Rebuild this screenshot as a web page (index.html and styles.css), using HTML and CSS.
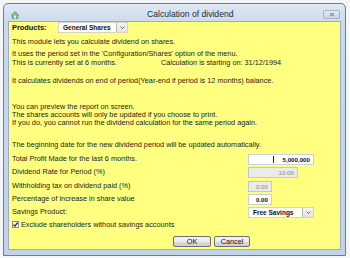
FILE: index.html
```html
<!DOCTYPE html>
<html>
<head>
<meta charset="utf-8">
<link rel="stylesheet" href="styles.css">
</head>
<body>
<div class="window">
  <div class="titlebar">
    <svg class="appicon" width="8" height="8" viewBox="0 0 8 8">
      <path d="M0.5 4 L4 0.8 L7.5 4 L6.8 4 L6.8 7.5 L1.2 7.5 L1.2 4 Z" fill="#7fc08a" stroke="#3f8a55" stroke-width="0.6"/>
      <rect x="3" y="4.6" width="2" height="2.9" fill="#e8f5e8"/>
    </svg>
    <div class="title">Calculation of dividend</div>
    <div class="closebtn">
      <svg width="6" height="5" viewBox="0 0 6 5"><path d="M1 0.8 L5 4.2 M5 0.8 L1 4.2" stroke="#7a8595" stroke-width="1.1"/></svg>
    </div>
  </div>
  <div class="client">
    <div class="products">
      <span class="prodlabel">Products:</span>
      <div class="select sel-products">
        <span class="seltext">General Shares</span>
        <span class="selarrow"><svg width="5" height="3" viewBox="0 0 5 3"><path d="M0.5 0.5 L2.5 2.5 L4.5 0.5" fill="none" stroke="#555" stroke-width="0.9"/></svg></span>
      </div>
    </div>
    <div class="line l1">This module lets you calculate dividend on shares.</div>
    <div class="line l2">It uses the period set in the 'Configuration/Shares' option of the menu.</div>
    <div class="line l3"><span class="cur">This is currently set at 6 months.</span><span>Calculation is starting on: 31/12/1994</span></div>
    <div class="line l4">It calculates dividends on end of period(Year-end if period is 12 months) balance.</div>
    <div class="block8">
      <div class="line8">You can preview the report on screen.</div>
      <div class="line8">The shares accounts will only be updated if you choose to print.</div>
      <div class="line8">If you do, you cannot run the dividend calculation for the same period again.</div>
    </div>
    <div class="line l5">The beginning date for the new dividend period will be updated automatically.</div>
    <div class="form">
      <div class="row r1">
        <span class="label">Total Profit Made for the last 6 months.</span>
        <div class="input wide"><span class="caret"></span><span class="val bold">5,000,000</span></div>
      </div>
      <div class="row r2">
        <span class="label">Dividend Rate for Period (%)</span>
        <div class="input mid disabled"><span class="val">10.00</span></div>
      </div>
      <div class="row r3">
        <span class="label">Withholding tax on dividend paid (%)</span>
        <div class="input small disabled"><span class="val">0.00</span></div>
      </div>
      <div class="row r4">
        <span class="label">Percentage of increase in share value</span>
        <div class="input small"><span class="val bold">0.00</span></div>
      </div>
      <div class="row r5">
        <span class="label">Savings Product:</span>
        <div class="select sel-savings">
          <span class="seltext">Free Savings</span>
          <span class="selarrow"><svg width="5" height="3" viewBox="0 0 5 3"><path d="M0.5 0.5 L2.5 2.5 L4.5 0.5" fill="none" stroke="#555" stroke-width="0.9"/></svg></span>
        </div>
      </div>
    </div>
    <div class="check">
      <span class="box"><svg width="7" height="7" viewBox="0 0 7 7"><path d="M1.5 3.6 L2.9 5.1 L5.6 1.6" fill="none" stroke="#222" stroke-width="1.2"/></svg></span>
      <span>Exclude shareholders without savings accounts</span>
    </div>
    <div class="buttons">
      <div class="btn ok">OK</div>
      <div class="btn cancel">Cancel</div>
    </div>
  </div>
</div>
</body>
</html>
```
FILE: styles.css
```css
* { box-sizing: border-box; }
html, body { margin: 0; padding: 0; background: #f4f6f9; }
body { width: 350px; height: 258px; overflow: hidden; font-family: "Liberation Sans", Arial, sans-serif; color: #1c1c1c; }

.window {
  margin: 3px 0 0 3px;
  width: 343px;
  height: 253px;
  border: 1px solid #6d7d93;
  border-radius: 5px 5px 0 0;
  background: linear-gradient(#dfe8f3 0, #cbd9ea 20px, #c3d3e7 100%);
  padding: 0 4px 5px 4px;
  display: flex;
  flex-direction: column;
}

.titlebar {
  height: 17px;
  display: flex;
  align-items: center;
  flex: none;
}
.appicon { margin-left: 3px; margin-top: 4px; flex: none; }
.title {
  margin-left: 128px;
  margin-top: 2px;
  font-size: 8.6px;
  color: #1e2a3a;
  white-space: nowrap;
}
.closebtn {
  margin-left: auto;
  margin-right: 1px;
  margin-top: 3px;
  width: 17px;
  height: 9px;
  border: 1px solid #a6b4c6;
  border-radius: 2px;
  background: linear-gradient(#e4ebf4, #c9d5e4);
  display: flex;
  align-items: center;
  justify-content: center;
}

.client {
  flex: 1;
  background: #ffff80;
  border: 1px solid #9aabc2;
  padding: 0 0 0 3px;
  font-size: 7.3px;
  display: flex;
  flex-direction: column;
}

.products {
  display: flex;
  align-items: center;
  margin-top: 0;
  height: 11px;
}
.prodlabel { width: 46px; font-weight: bold; font-size: 7.4px; color: #111; }

.select {
  display: flex;
  align-items: stretch;
  height: 11px;
  background: #fff;
  border: 1px solid #d4d4c0;
}
.seltext { flex: 1; font-weight: bold; font-size: 6.5px; padding-left: 4px; display: flex; align-items: center; color: #111; }
.selarrow {
  width: 11px;
  border-left: 1px solid #b8b8b8;
  background: linear-gradient(#f6f6f6, #e2e2e2);
  display: flex;
  align-items: center;
  justify-content: center;
}
.sel-products { width: 70px; }
.sel-savings { width: 66px; }

.line { line-height: 9px; white-space: nowrap; }
.l1 { margin-top: 3.5px; }
.l2 { margin-top: 3px; }
.l3 { display: flex; }
.l3 .cur { width: 149px; }
.l4 { margin-top: 9px; }
.block8 { margin-top: 18.5px; }
.line8 { line-height: 8px; white-space: nowrap; }
.l5 { margin-top: 12.5px; }

.form { display: flex; flex-direction: column; margin-top: 5px; }
.row { display: flex; align-items: center; height: 11px; }
.label { width: 236px; margin-top: -2px; white-space: nowrap; }
.r2 { margin-top: 2px; }
.r3 { margin-top: 3.5px; }
.r4 { margin-top: 2px; }
.r5 { margin-top: 2px; }

.input {
  height: 11px;
  background: #fff;
  border: 1px solid #c8d0dc;
  display: flex;
  align-items: center;
  font-size: 6.2px;
  padding-right: 3px;
}
.input .val { margin-left: auto; }
.input .bold { font-weight: bold; color: #111; }
.input.disabled { background: #ebebeb; color: #8a8a8a; border-color: #c0c8d4; }
.wide { width: 66px; }
.mid { width: 50px; }
.small { width: 24px; }
.caret { width: 1px; height: 7px; background: #222; margin-left: 24px; }

.check { display: flex; align-items: center; margin-top: 3px; height: 7px; }
.box {
  width: 7px; height: 7px;
  border: 1px solid #8a8a8a;
  background: #f4f4f4;
  margin-right: 2px;
  display: flex;
}
.box svg { margin: -1px; }

.buttons { display: flex; margin-top: 8px; margin-left: 161px; gap: 3px; }
.btn {
  height: 11px;
  border: 1px solid #707070;
  border-radius: 2px;
  background: linear-gradient(#f2f2f2 0, #ebebeb 50%, #dddddd 51%, #cfcfcf 100%);
  font-size: 7.3px;
  display: flex;
  align-items: center;
  justify-content: center;
  color: #111;
}
.ok { width: 38px; }
.cancel { width: 36px; }
```
